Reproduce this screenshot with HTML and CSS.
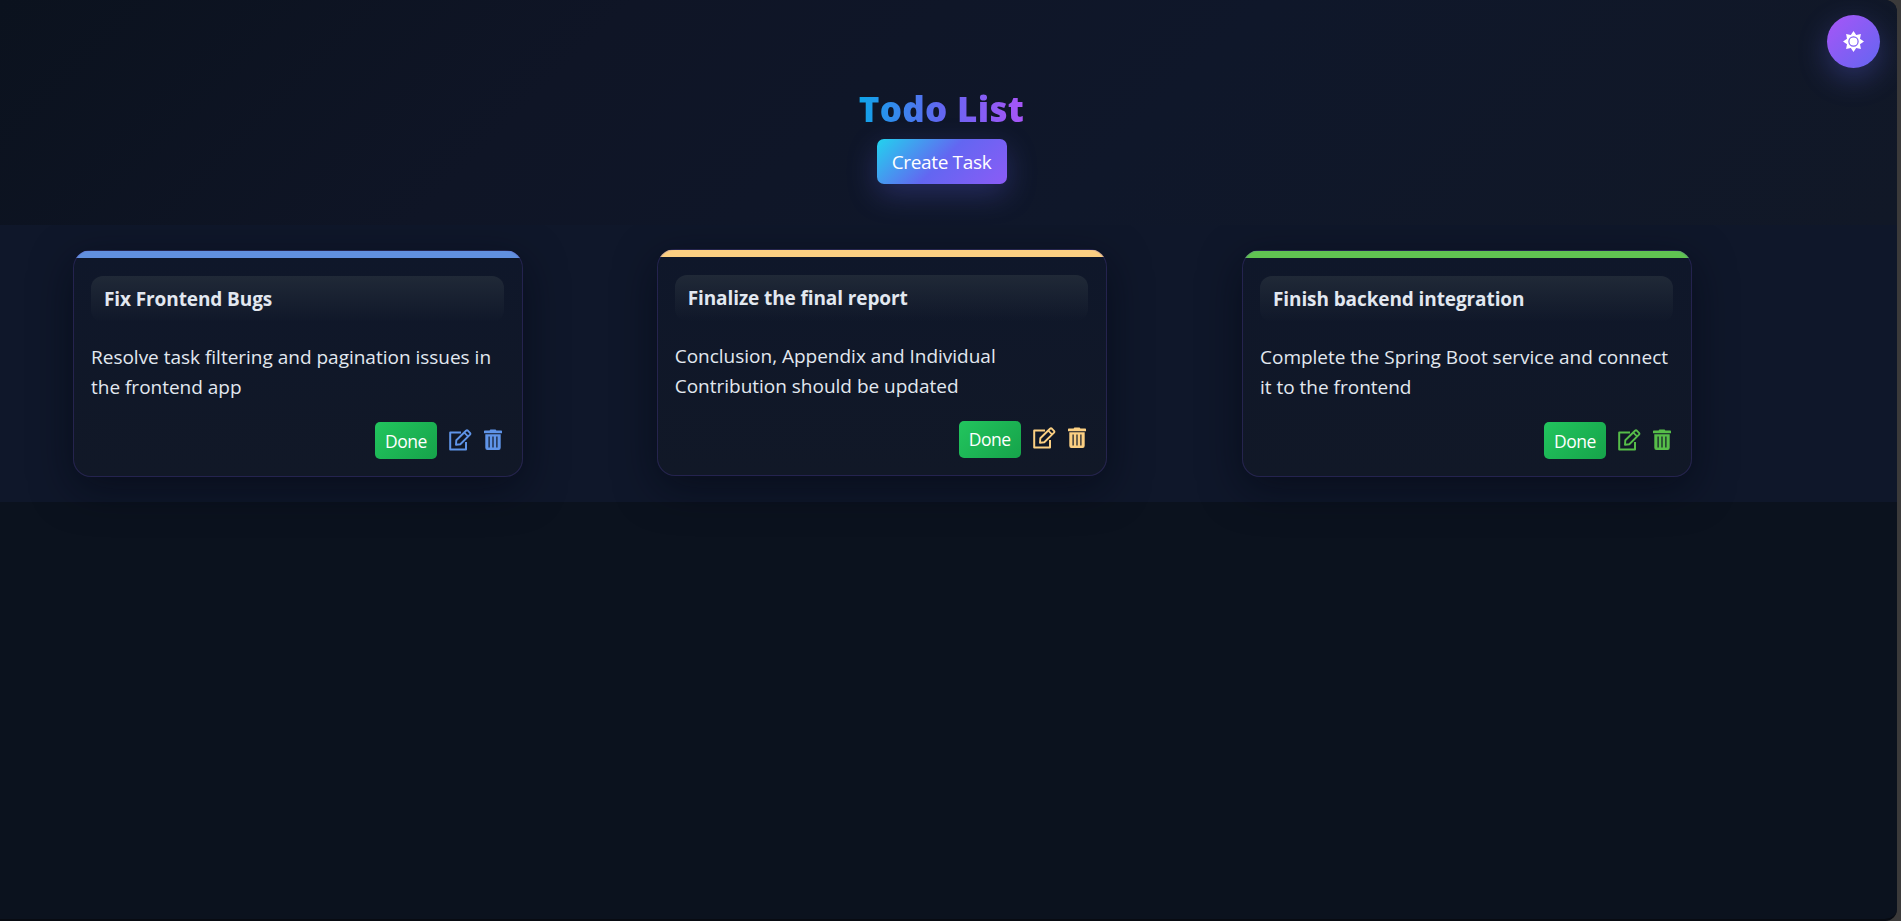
FILE: index.html
```html
<!DOCTYPE html>
<html lang="en">
<head>
<meta charset="utf-8">
<title>Todo List</title>
<link rel="stylesheet" href="styles.css">
</head>
<body>
<svg width="0" height="0" class="defs">
  <symbol id="edit" viewBox="0 0 24 22">
    <path d="M13 3.5H2.2V20.5H18V13" fill="none" stroke="currentColor" stroke-width="2" stroke-linejoin="round"/>
    <path d="M8.3 11.3 18 1.8Q19 .9 20 1.8L22 3.8Q22.8 4.7 22 5.6L12.3 15.2 8 15.8Z" fill="none" stroke="currentColor" stroke-width="1.9" stroke-linejoin="round"/>
    <path d="m16.3 3.7 4 4" stroke="currentColor" stroke-width="1.7"/>
  </symbol>
  <symbol id="trash" viewBox="0 0 18 22">
    <path fill="currentColor" fill-rule="evenodd" d="M0 2.2Q0 1.6 .7 1.6H5.6L6.4 .5H11.6L12.4 1.6H17.3Q18 1.6 18 2.2V4.2H0ZM1.3 5.3H16.7V18.7Q16.7 21 14.6 21H3.4Q1.3 21 1.3 18.7ZM4.5 7.5V18.5H5.7V7.5ZM8.4 7.5V18.5H9.6V7.5ZM12.3 7.5V18.5H13.5V7.5Z"/>
  </symbol>
</svg>
<div class="app">
  <header class="top">
    <h1>Todo List</h1>
    <button class="create">Create Task</button>
    <button class="theme" aria-label="Toggle theme">
      <svg width="21" height="21" viewBox="-10.5 -10.5 21 21">
        <path fill="#fff" d="M0-10.5 2.7-6.5 7.4-7.4 6.5-2.7 10.5 0 6.5 2.7 7.4 7.4 2.7 6.5 0 10.5-2.7 6.5-7.4 7.4-6.5 2.7-10.5 0-6.5-2.7-7.4-7.4-2.7-6.5Z"/>
        <circle r="4.6" fill="#fff" stroke="#7f5df5" stroke-width="1.2"/>
      </svg>
    </button>
  </header>
  <main class="list">
    <article class="card blue">
      <h2>Fix Frontend Bugs</h2>
      <p>Resolve task filtering and pagination issues in<br>the frontend app</p>
      <div class="actions"><button class="done">Done</button><svg class="edit"><use href="#edit"/></svg><svg class="trash"><use href="#trash"/></svg></div>
    </article>
    <article class="card amber">
      <h2>Finalize the final report</h2>
      <p>Conclusion, Appendix and Individual<br>Contribution should be updated</p>
      <div class="actions"><button class="done">Done</button><svg class="edit"><use href="#edit"/></svg><svg class="trash"><use href="#trash"/></svg></div>
    </article>
    <article class="card green">
      <h2>Finish backend integration</h2>
      <p>Complete the Spring Boot service and connect<br>it to the frontend</p>
      <div class="actions"><button class="done">Done</button><svg class="edit"><use href="#edit"/></svg><svg class="trash"><use href="#trash"/></svg></div>
    </article>
  </main>
</div>
</body>
</html>
```

FILE: styles.css
```css
* { box-sizing: border-box; }
body { margin: 0; height: 921px; overflow: hidden; background: #3b3a3a; font-family: "Open Sans", "Noto Sans", sans-serif; color: #e2e8f0; }
.defs { display: block; }
.app { width: 1897px; height: 921px; background: #0b121e; border-radius: 0 12px 12px 0; overflow: hidden; border-bottom: 2px solid #080b12; }
.top { position: relative; height: 225px; padding: 87px 14px 0 0; display: flex; flex-direction: column; align-items: center; background: linear-gradient(135deg, #0b121e, #0f1526 30%, #0f172a 60%, #111827); }
h1 { margin: 0; height: 52px; line-height: 44px; font-size: 35px; font-weight: 800; letter-spacing: .3px; background: linear-gradient(90deg, #0ea5e9, #6366f1 50%, #a855f7); background-clip: text; -webkit-background-clip: text; color: transparent; }
button { font-family: inherit; border: 0; padding: 0; color: #fff; }
.create { width: 130px; height: 45px; border-radius: 7px; font-size: 19px; letter-spacing: -.35px; background: linear-gradient(135deg, #22d3ee, #6366f1 50%, #8b5cf6); box-shadow: 0 10px 30px rgba(99,102,241,.28); }
.theme { position: absolute; left: 1827px; top: 15px; width: 53px; height: 53px; border-radius: 50%; display: grid; place-items: center; background: linear-gradient(135deg, #a855f7, #6366f1); box-shadow: 0 10px 30px rgba(99,102,241,.32); }
.theme svg { margin-top: -1px; }
.list { height: 277px; padding: 25px 0 0 73px; display: flex; gap: 134.5px; background: #0f172a; }
.card { width: 450px; height: 227px; padding: 25px 18px 0 17px; border: 1px solid rgba(99,73,190,.25); border-radius: 18px; background: linear-gradient(#6190df, #6190df) 0 0 / 100% 7px no-repeat, linear-gradient(180deg, #0f172a, #111827); box-shadow: 0 12px 40px rgba(3,7,18,.55); }
.amber { margin: -1.5px .8px 0 -.8px; background: linear-gradient(#fbcf82, #fbcf82) 0 0 / 100% 7px no-repeat, linear-gradient(180deg, #0f172a, #111827); }
.green { background: linear-gradient(#60c351, #60c351) 0 0 / 100% 7px no-repeat, linear-gradient(180deg, #0f172a, #111827); }
h2 { margin: 0; height: 46px; padding-left: 13px; border-radius: 12px; line-height: 46px; font-size: 19px; font-weight: 700; letter-spacing: -.1px; background: linear-gradient(#202937, rgba(32,41,55,0)); }
p { margin: 20px 0 0; font-size: 19px; line-height: 30px; white-space: nowrap; letter-spacing: -.01px; }
.actions { display: flex; align-items: center; justify-content: flex-end; height: 37px; margin-top: 20px; padding-right: 2px; }
.done { width: 62px; height: 37px; border-radius: 5px; font-size: 17.5px; letter-spacing: -.5px; background: linear-gradient(135deg, #22c55e, #16a34a); }
.edit { width: 24px; height: 22px; margin: 0 0 2px 11px; }
.trash { width: 18px; height: 22px; margin: 0 0 2px 12px; }
.blue svg { color: #5f94e8; }
.amber svg { color: #fbcf82; }
.green svg { color: #56bd49; }
```
